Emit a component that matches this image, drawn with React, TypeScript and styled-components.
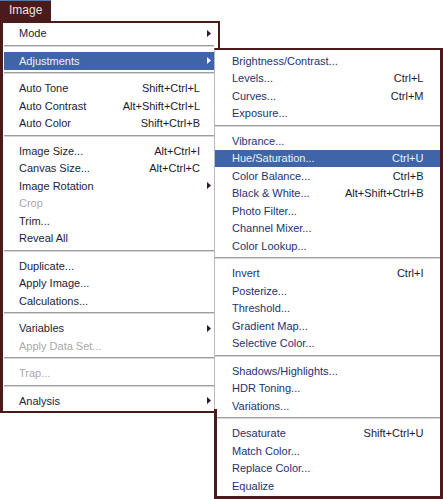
import React from 'react';
import styled, { createGlobalStyle } from 'styled-components';

const brown = '#4a1b1a';

type Entry =
	| { label: string; shortcut?: string; sub?: boolean; disabled?: boolean; active?: boolean }
	| 'sep';

const mainItems: Entry[] = [
	{ label: 'Mode', sub: true },
	'sep',
	{ label: 'Adjustments', sub: true, active: true },
	'sep',
	{ label: 'Auto Tone', shortcut: 'Shift+Ctrl+L' },
	{ label: 'Auto Contrast', shortcut: 'Alt+Shift+Ctrl+L' },
	{ label: 'Auto Color', shortcut: 'Shift+Ctrl+B' },
	'sep',
	{ label: 'Image Size...', shortcut: 'Alt+Ctrl+I' },
	{ label: 'Canvas Size...', shortcut: 'Alt+Ctrl+C' },
	{ label: 'Image Rotation', sub: true },
	{ label: 'Crop', disabled: true },
	{ label: 'Trim...' },
	{ label: 'Reveal All' },
	'sep',
	{ label: 'Duplicate...' },
	{ label: 'Apply Image...' },
	{ label: 'Calculations...' },
	'sep',
	{ label: 'Variables', sub: true },
	{ label: 'Apply Data Set...', disabled: true },
	'sep',
	{ label: 'Trap...', disabled: true },
	'sep',
	{ label: 'Analysis', sub: true }
];

const adjustItems: Entry[] = [
	{ label: 'Brightness/Contrast...' },
	{ label: 'Levels...', shortcut: 'Ctrl+L' },
	{ label: 'Curves...', shortcut: 'Ctrl+M' },
	{ label: 'Exposure...' },
	'sep',
	{ label: 'Vibrance...' },
	{ label: 'Hue/Saturation...', shortcut: 'Ctrl+U', active: true },
	{ label: 'Color Balance...', shortcut: 'Ctrl+B' },
	{ label: 'Black & White...', shortcut: 'Alt+Shift+Ctrl+B' },
	{ label: 'Photo Filter...' },
	{ label: 'Channel Mixer...' },
	{ label: 'Color Lookup...' },
	'sep',
	{ label: 'Invert', shortcut: 'Ctrl+I' },
	{ label: 'Posterize...' },
	{ label: 'Threshold...' },
	{ label: 'Gradient Map...' },
	{ label: 'Selective Color...' },
	'sep',
	{ label: 'Shadows/Highlights...' },
	{ label: 'HDR Toning...' },
	{ label: 'Variations...' },
	'sep',
	{ label: 'Desaturate', shortcut: 'Shift+Ctrl+U' },
	{ label: 'Match Color...' },
	{ label: 'Replace Color...' },
	{ label: 'Equalize' }
];

const GlobalStyle = createGlobalStyle`
	html, body {
		margin: 0;
		padding: 0;
		background: #ffffff;
	}
	body {
		font-family: 'Liberation Sans', Arial, sans-serif;
		font-size: 11px;
	}
`;

const Stage = styled.div`
	position: relative;
	width: 443px;
	height: 499px;
	overflow: hidden;
	display: flex;
	flex-direction: column;
	align-items: flex-start;
`;

const MenuTab = styled.div`
	box-sizing: border-box;
	width: 51px;
	height: 21px;
	background: ${brown};
	border-top: 1px solid #5877ad;
	color: #e4e4ea;
	font-size: 12px;
	line-height: 19px;
	padding-left: 9px;
`;

const MainMenu = styled.div`
	box-sizing: border-box;
	width: 220px;
	margin-top: 0;
	border-top: 2px solid ${brown};
	border-left: 3px solid ${brown};
	border-right: 2px solid ${brown};
	border-bottom: 2px solid ${brown};
	background: #ffffff;
	padding: 1.5px 4px 1.5px 1px;
`;

const SubMenu = styled.div`
	position: absolute;
	left: 214px;
	top: 48px;
	z-index: 2;
	box-sizing: border-box;
	width: 229px;
	background: #ffffff;
	border-top: 2px solid ${brown};
	border-right: 3px solid ${brown};
	border-bottom: 3px solid ${brown};
	border-left: 1px solid #b9b9b9;
	padding: 2px 0 1.5px 0;

	&::before {
		content: '';
		position: absolute;
		left: -1px;
		top: 359px;
		bottom: -3px;
		width: 3px;
		background: ${brown};
	}
`;

const Row = styled.div<{ $active?: boolean; $disabled?: boolean; $sub?: boolean }>`
	display: flex;
	align-items: center;
	height: 17.5px;
	padding-left: ${(p) => (p.$sub ? '17px' : '15px')};
	background: ${(p) => (p.$active ? '#3f64a8' : 'transparent')};
	color: ${(p) => (p.$active ? '#eef1f7' : p.$disabled ? '#a9a9a9' : p.$sub ? '#1d3370' : '#1c1c3c')};
	white-space: nowrap;
`;

const Label = styled.span`
	flex: 1;
`;

const Shortcut = styled.span<{ $active?: boolean }>`
	color: ${(p) => (p.$active ? '#eef1f7' : '#1a1a30')};
`;

const Trail = styled.span<{ $sub?: boolean }>`
	display: flex;
	justify-content: flex-end;
	align-items: center;
	width: ${(p) => (p.$sub ? '16.5px' : '14px')};
	padding-right: 3px;
	box-sizing: border-box;
`;

const Separator = styled.div`
	height: 10px;
	padding-top: 2.5px;
	box-sizing: border-box;

	&::after {
		content: '';
		display: block;
		height: 1px;
		background: #9e9e9e;
		border-bottom: 1px solid #d6d6d6;
	}
`;

const Arrow = ({ light }: { light?: boolean }) => (
	<svg width="4" height="7" viewBox="0 0 4 7">
		<polygon points="0,0 4,3.5 0,7" fill={light ? '#f2f4f8' : '#2a1830'} />
	</svg>
);

const MenuList = ({ items, sub }: { items: Entry[]; sub?: boolean }) => (
	<>
		{items.map((item, i) =>
			item === 'sep' ? (
				<Separator key={i} />
			) : (
				<Row key={i} $active={item.active} $disabled={item.disabled} $sub={sub}>
					<Label>{item.label}</Label>
					{item.shortcut && <Shortcut $active={item.active}>{item.shortcut}</Shortcut>}
					<Trail $sub={sub}>{item.sub && <Arrow light={item.active} />}</Trail>
				</Row>
			)
		)}
	</>
);

export default function App() {
	return (
		<Stage>
			<GlobalStyle />
			<MenuTab>Image</MenuTab>
			<MainMenu>
				<MenuList items={mainItems} />
			</MainMenu>
			<SubMenu>
				<MenuList items={adjustItems} sub />
			</SubMenu>
		</Stage>
	);
}
